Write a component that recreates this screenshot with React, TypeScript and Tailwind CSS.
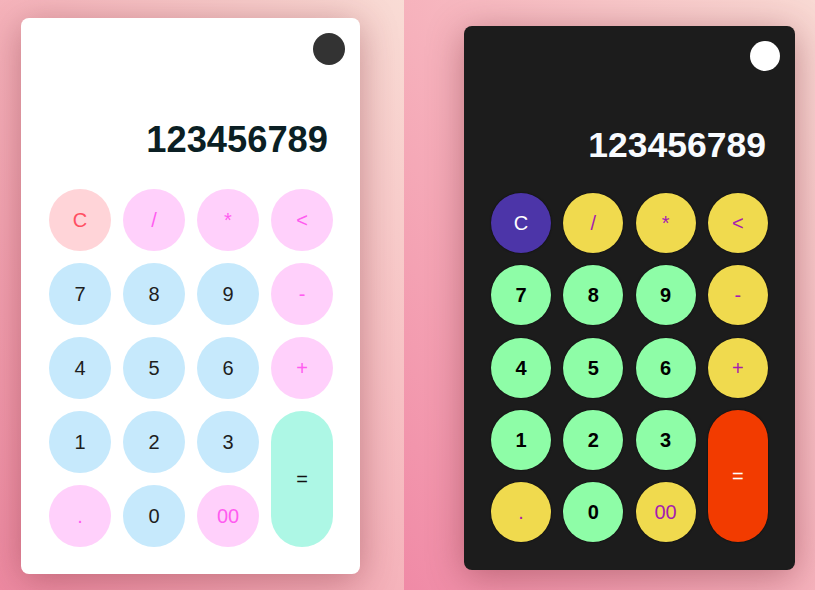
import React from "react";

type Kind = "clear" | "op" | "num" | "eq";

const keys: { label: string; kind: Kind; tall?: boolean }[] = [
  { label: "C", kind: "clear" },
  { label: "/", kind: "op" },
  { label: "*", kind: "op" },
  { label: "<", kind: "op" },
  { label: "7", kind: "num" },
  { label: "8", kind: "num" },
  { label: "9", kind: "num" },
  { label: "-", kind: "op" },
  { label: "4", kind: "num" },
  { label: "5", kind: "num" },
  { label: "6", kind: "num" },
  { label: "+", kind: "op" },
  { label: "1", kind: "num" },
  { label: "2", kind: "num" },
  { label: "3", kind: "num" },
  { label: "=", kind: "eq", tall: true },
  { label: ".", kind: "op" },
  { label: "0", kind: "num" },
  { label: "00", kind: "op" },
];

const lightStyles: Record<Kind, string> = {
  clear: "bg-[#ffd4d8] text-[#ff4f62]",
  op: "bg-[#ffd0fb] text-[#ff5cf0]",
  num: "bg-[#c6e9fc] text-[#1e1e1e]",
  eq: "bg-[#adf7e5] text-[#111]",
};

const darkStyles: Record<Kind, string> = {
  clear: "bg-[#4c35a8] text-white",
  op: "bg-[#f0da4e] text-[#a61cb0]",
  num: "bg-[#8efda7] text-black font-bold",
  eq: "bg-[#f23b00] text-white",
};

function Calc({ dark }: { dark: boolean }) {
  const styles = dark ? darkStyles : lightStyles;
  return (
    <div
      className={
        dark
          ? "flex h-[544px] w-[331px] flex-col rounded-[8px] bg-[#1c1c1c] px-[27px] pb-[27px] pt-[15px] shadow-[0_6px_36px_rgba(110,30,40,0.42)]"
          : "flex h-[556px] w-[339px] flex-col rounded-[8px] bg-white px-[28px] pb-[28px] pt-[15px] shadow-[0_6px_36px_rgba(110,30,40,0.38)]"
      }
    >
      <div className={dark ? "-mr-[12px] flex justify-end" : "-mr-[13px] flex justify-end"}>
        <div
          className={
            dark
              ? "h-[30px] w-[30px] rounded-full bg-white"
              : "h-[32px] w-[32px] rounded-full bg-[#333333]"
          }
        />
      </div>
      <div
        className={
          dark
            ? "mt-[57px] mb-[30px] pr-[2px] text-right text-[35.5px] font-bold leading-[35px] text-[#f8fbff]"
            : "mt-[57px] mb-[31px] pr-[4px] text-right text-[36.3px] font-bold leading-[36px] text-[#0b1f24]"
        }
        style={{ fontFamily: '"Liberation Sans", Arial, sans-serif' }}
      >
        123456789
      </div>
      <div
        className={
          dark
            ? "grid grid-cols-[repeat(4,60px)] auto-rows-[60px] gap-x-[12.3px] gap-y-[12.3px]"
            : "grid grid-cols-[repeat(4,62px)] auto-rows-[62px] gap-[12px]"
        }
      >
        {keys.map((k) => (
          <div
            key={k.label}
            className={
              "flex items-center justify-center rounded-full text-[20px] " +
              styles[k.kind] +
              (k.tall ? " row-span-2" : "") +
              (dark
                ? " shadow-[0_0_2px_rgba(0,0,0,0.7)]"
                : " shadow-[0_0_2px_rgba(255,255,255,0.9)]")
            }
            style={{ fontFamily: '"Liberation Sans", Arial, sans-serif' }}
          >
            {k.label}
          </div>
        ))}
      </div>
    </div>
  );
}

export default function App() {
  return (
    <div className="flex h-[590px] w-[815px] overflow-hidden">
      <div className="h-full w-[404px] shrink-0 bg-gradient-to-tr from-[#ee8aa2] to-[#f9dcd5] pl-[21px] pt-[18px]">
        <Calc dark={false} />
      </div>
      <div className="h-full flex-1 bg-gradient-to-tr from-[#f08aa6] to-[#f9dad4] pl-[60px] pt-[26px]">
        <Calc dark={true} />
      </div>
    </div>
  );
}
